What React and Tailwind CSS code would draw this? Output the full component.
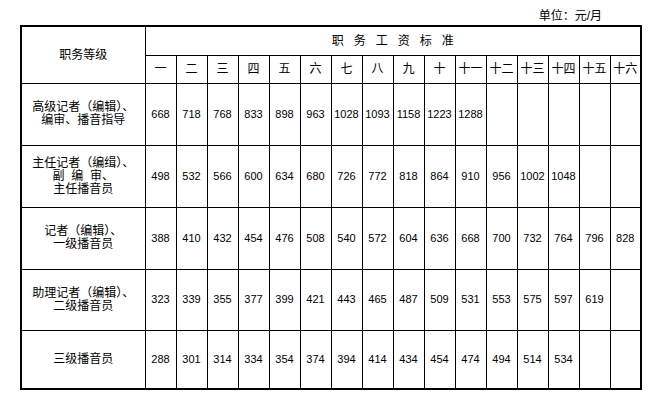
import React from 'react';

const cols = ['一', '二', '三', '四', '五', '六', '七', '八', '九', '十', '十一', '十二', '十三', '十四', '十五', '十六'];

const rows = [
    {
        title: ['高级记者（编辑）、', '编审、播音指导'],
        h: 'h-[62px]',
        values: [668, 718, 768, 833, 898, 963, 1028, 1093, 1158, 1223, 1288],
    },
    {
        title: ['主任记者（编缉）、', '副  编  审、', '主任播音员'],
        h: 'h-[62px]',
        values: [498, 532, 566, 600, 634, 680, 726, 772, 818, 864, 910, 956, 1002, 1048],
    },
    {
        title: ['记者（编辑）、', '一级播音员'],
        h: 'h-[62px]',
        values: [388, 410, 432, 454, 476, 508, 540, 572, 604, 636, 668, 700, 732, 764, 796, 828],
    },
    {
        title: ['助理记者（编辑）、', '二级播音员'],
        h: 'h-[61px]',
        values: [323, 339, 355, 377, 399, 421, 443, 465, 487, 509, 531, 553, 575, 597, 619],
    },
    {
        title: ['三级播音员'],
        h: 'h-[59px]',
        values: [288, 301, 314, 334, 354, 374, 394, 414, 434, 454, 474, 494, 514, 534],
    },
];

export default function App() {
    return (
        <div className="w-[655px] h-[402px] bg-white text-black font-['Liberation_Sans','Noto_Sans_CJK_SC',sans-serif]">
            <div className="ml-[20px] w-[620px]">
                {/* 单位 */}
                <div className="h-[25px] pt-[9px] pr-[38px] text-right text-[12px] leading-[14px]">单位：元/月</div>

                <table className="w-[620px] table-fixed border-collapse border-2 border-black">
                    <colgroup>
                        <col className="w-[124px]" />
                        {cols.map(c => (
                            <col key={c} className="w-[31px]" />
                        ))}
                    </colgroup>
                    <thead>
                        <tr className="h-[29px]">
                            <th rowSpan={2} className="border border-black text-[12px] font-normal leading-[14px]">
                                职务等级
                            </th>
                            <th colSpan={16} className="border border-black text-[12px] font-normal tracking-[10px] pl-[10px]">
                                职务工资标准
                            </th>
                        </tr>
                        <tr className="h-[28px]">
                            {cols.map(c => (
                                <th key={c} className="border border-black p-0 text-[12px] font-normal whitespace-nowrap">
                                    {c}
                                </th>
                            ))}
                        </tr>
                    </thead>
                    <tbody>
                        {rows.map((row, i) => (
                            <tr key={i} className={row.h}>
                                <td className="border border-black text-center text-[12px] leading-[13px]">
                                    {row.title.map(t => (
                                        <div key={t} className="whitespace-pre">{t}</div>
                                    ))}
                                </td>
                                {cols.map((c, j) => (
                                    <td key={c} className="border border-black p-0 text-center text-[11px]">
                                        {row.values[j] ?? ''}
                                    </td>
                                ))}
                            </tr>
                        ))}
                    </tbody>
                </table>
            </div>
        </div>
    );
}
